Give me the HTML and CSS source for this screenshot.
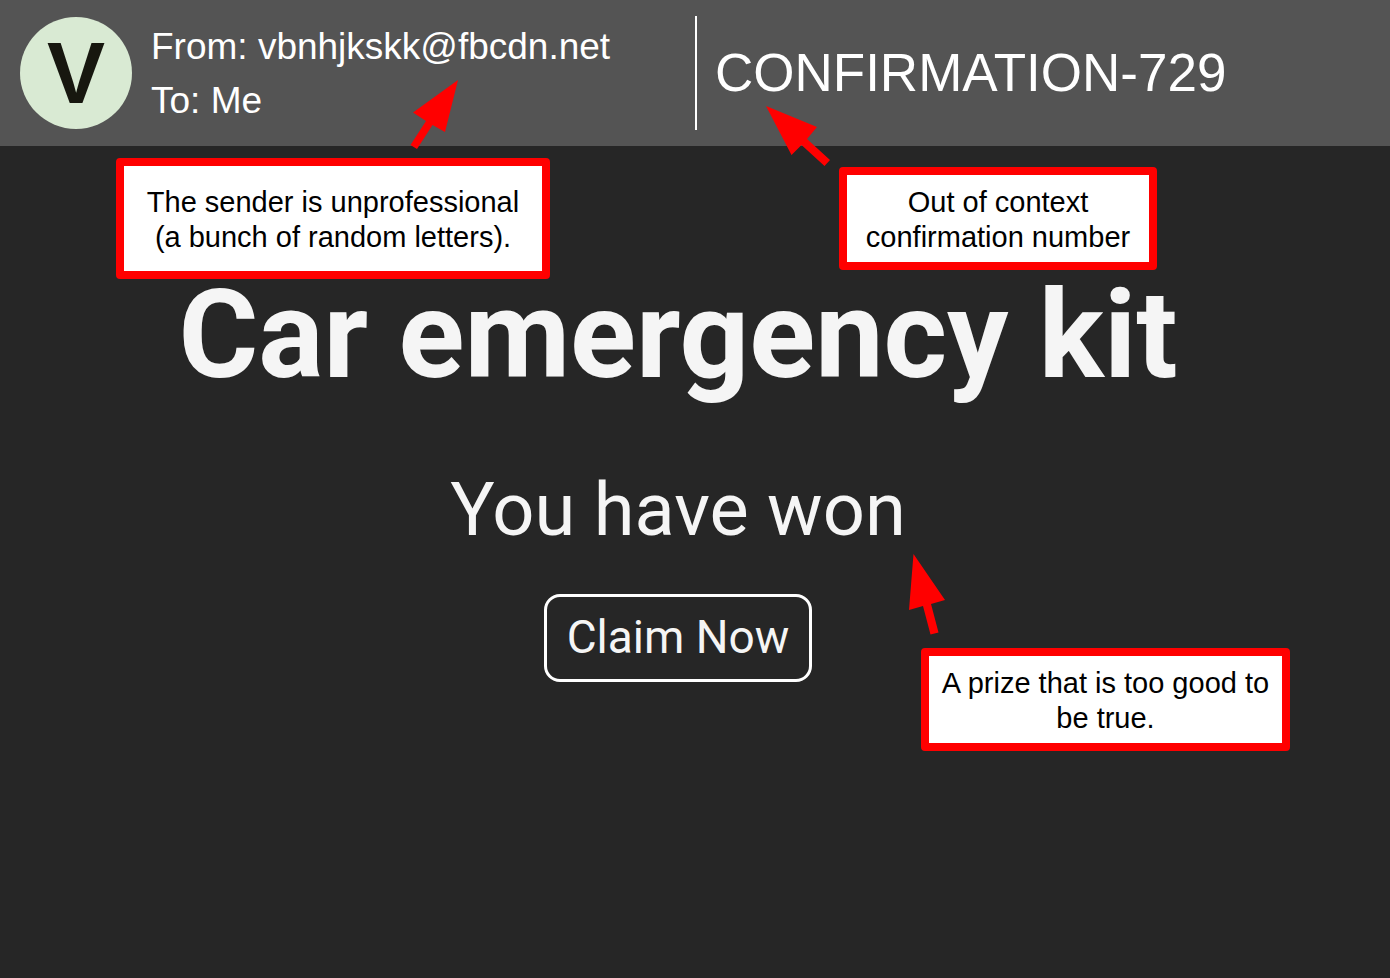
FILE: index.html
```html
<!DOCTYPE html>
<html lang="en">
<head>
<meta charset="utf-8">
<title>Car emergency kit</title>
<link rel="stylesheet" href="styles.css">
</head>
<body>
<div class="mail">
  <header class="mail-header">
    <div class="sender">
      <div class="avatar">V</div>
      <div class="addresses">
        <div>From: vbnhjkskk@fbcdn.net</div>
        <div>To: Me</div>
      </div>
    </div>
    <div class="subject">CONFIRMATION-729</div>
  </header>
  <main class="offer">
    <h1 class="offer-title">Car emergency kit</h1>
    <p class="offer-text">You have won</p>
    <button class="claim" type="button">Claim Now</button>
  </main>

  <svg class="arrow arrow-sender" width="50" height="72" viewBox="0 0 50 72" aria-hidden="true">
    <path d="M46 1 33 53 20.500 46 5 70-1.500 66 14 42 1 33.500Z"/>
  </svg>
  <aside class="callout callout-sender">The sender is unprofessional (a bunch of random letters).</aside>

  <svg class="arrow arrow-subject" width="68" height="62" viewBox="0 0 68 62" aria-hidden="true">
    <path d="M2 1 53 22 43 34 66 55 60.500 61 37.500 40 27.500 50Z"/>
  </svg>
  <aside class="callout callout-subject">Out of context confirmation number</aside>

  <svg class="arrow arrow-prize" width="38" height="82" viewBox="0 0 38 82" aria-hidden="true">
    <path d="M5.500 1 37 47 23 51 30.500 79.500 22.500 81.500 15 53 1 57Z"/>
  </svg>
  <aside class="callout callout-prize">A prize that is too good to be true.</aside>
</div>
</body>
</html>
```
FILE: styles.css
```css
* {
  box-sizing: border-box;
}

body {
  margin: 0;
  background: #262626;
  font-family: "Liberation Sans", Arial, sans-serif;
}

.mail {
  position: relative;
  min-height: 100vh;
}

.mail-header {
  display: grid;
  grid-template-columns: 1fr 1fr;
  align-items: center;
  padding: 16px 0;
  background: #545454;
  color: #fff;
}

.sender {
  display: flex;
  align-items: center;
  gap: 19px;
  padding-left: 20px;
}

.avatar {
  display: flex;
  align-items: center;
  justify-content: center;
  width: 112px;
  height: 112px;
  border-radius: 50%;
  background: #d9ead3;
  color: #17170f;
  font-size: 87px;
  font-weight: bold;
}

.addresses {
  padding-top: 2px;
  font-size: 37px;
  line-height: 54px;
}

.subject {
  padding-left: 18px;
  border-left: 2px solid #fff;
  font-size: 53px;
  line-height: 114px;
}

.offer {
  display: flex;
  flex-direction: column;
  align-items: center;
  padding: 115px 34px 0 0;
  color: #f5f5f5;
  font-family: Roboto, sans-serif;
  text-align: center;
}

.offer-title {
  margin: 0;
  font-size: 122px;
  font-weight: bold;
  line-height: 150px;
}

.offer-text {
  margin: 56px 0 41px;
  font-size: 74px;
  line-height: 86px;
}

.claim {
  padding: 13px 20px 15px;
  border: 3px solid #fff;
  border-radius: 16px;
  background: transparent;
  color: #f5f5f5;
  font-family: inherit;
  font-size: 46px;
  line-height: 54px;
}

.arrow {
  position: absolute;
  overflow: visible;
  fill: #f00;
}

.callout {
  position: absolute;
  display: flex;
  align-items: center;
  justify-content: center;
  border: 8px solid #f00;
  border-radius: 4px;
  background: #fff;
  color: #000;
  font-size: 29px;
  line-height: 35px;
  text-align: center;
}

.arrow-sender {
  left: 412px;
  top: 79px;
}

.callout-sender {
  left: 116px;
  top: 158px;
  width: 434px;
  padding: 19px 8px 16px;
}

.arrow-subject {
  left: 764px;
  top: 105px;
}

.callout-subject {
  left: 839px;
  top: 167px;
  width: 318px;
  padding: 10px 8px 7px;
}

.arrow-prize {
  left: 908px;
  top: 553px;
}

.callout-prize {
  left: 921px;
  top: 648px;
  width: 369px;
  padding: 10px 8px 7px;
}
```
